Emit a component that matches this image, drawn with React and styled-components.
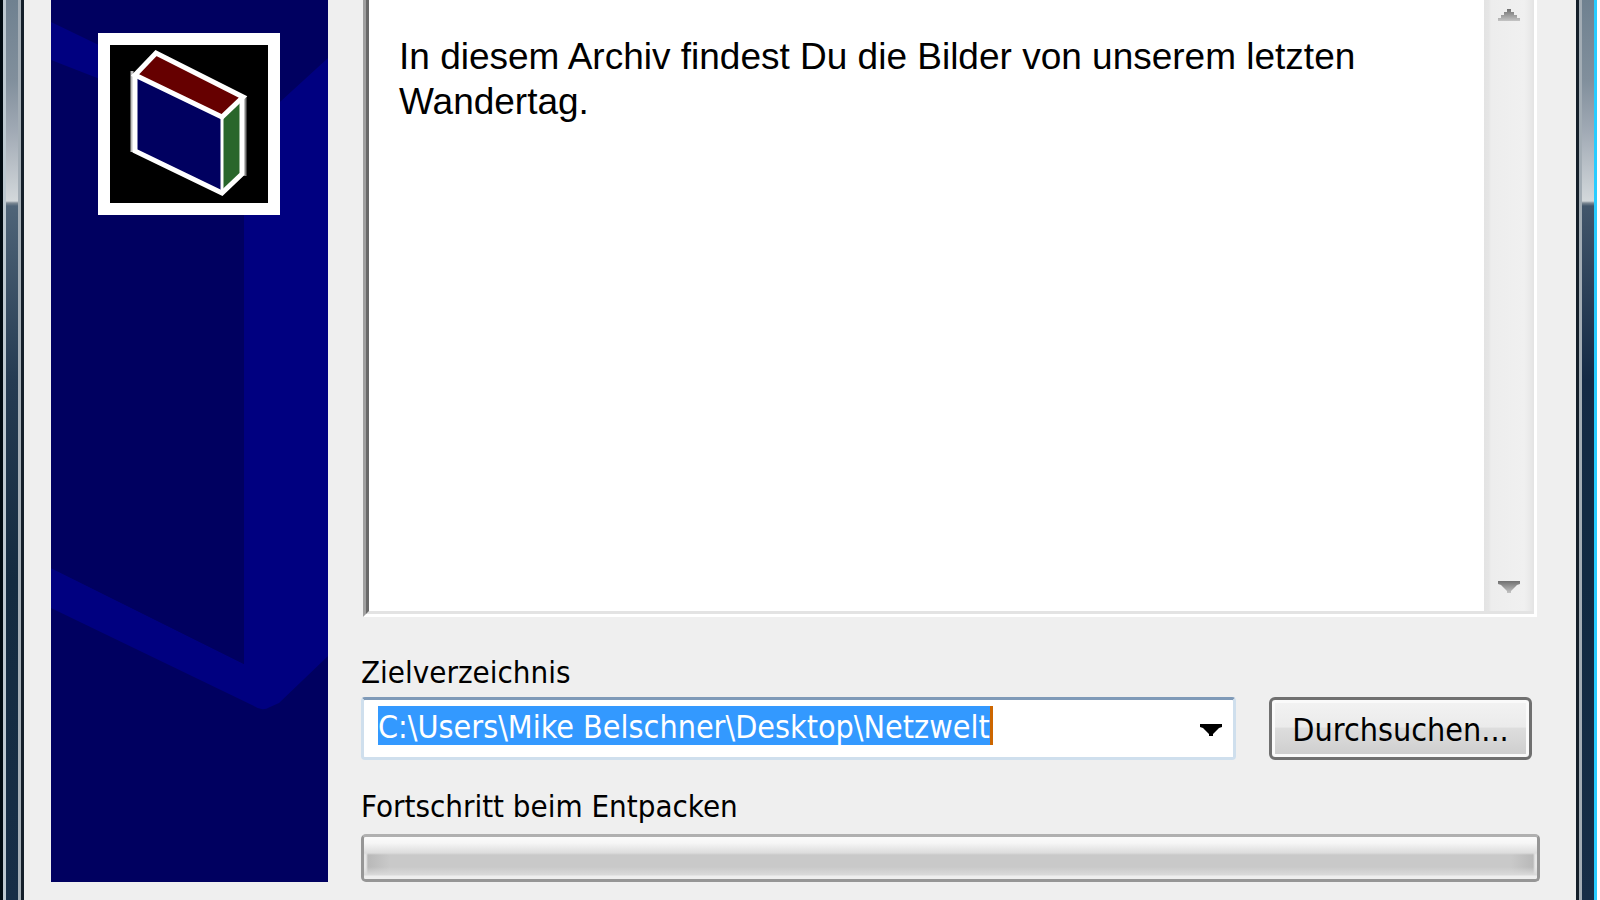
import { useId } from 'react';
import styled, { createGlobalStyle } from 'styled-components';

const GlobalStyle = createGlobalStyle`
  * {
    box-sizing: border-box;
  }

  body {
    margin: 0;
    background: #ffffff;
  }

  button,
  input,
  textarea {
    margin: 0;
    padding: 0;
    border: 0;
    color: inherit;
    font: inherit;
  }
`;

const Window = styled.div`
  display: grid;
  grid-template-columns: 24px minmax(0, 1fr) 24px;
  min-height: 100vh;
  overflow: hidden;
  color: #000000;
  font-family: 'DejaVu Sans Condensed', 'Noto Sans', sans-serif;
  font-size: 32px;
  line-height: 39px;
`;

const FrameSide = styled.div`
  display: flex;
`;

const Line = styled.span`
  width: 3px;
  background: ${({ $color }) => $color};
`;

const Glass = styled.span`
  flex: 1;
  background: linear-gradient(
    to bottom,
    #6f8190 0,
    #818f9c 80px,
    #a0a9b4 130px,
    #d3d8db 201px,
    #7d8994 203px,
    ${({ $upper }) => $upper} 206px,
    ${({ $middle }) => $middle} 380px,
    ${({ $lower }) => $lower} 580px,
    #172e47 900px
  );
`;

const Dialog = styled.main`
  display: grid;
  grid-template-columns: 277px minmax(0, 1fr);
  column-gap: 33px;
  align-items: start;
  padding: 0 36px 15px 27px;
  background: #efefef;
`;

const Banner = styled.aside`
  position: relative;
  height: 882px;
  background: #000060;
`;

const BannerShape = styled.svg`
  display: block;
  width: 100%;
  height: 100%;
`;

const LogoFrame = styled.div`
  position: absolute;
  top: 33px;
  left: 47px;
  width: 182px;
  height: 182px;
  border: 12px solid #ffffff;
  background: #000000;

  svg {
    display: block;
  }
`;

const Content = styled.div`
  display: flex;
  flex-direction: column;
  min-width: 0;
`;

const Memo = styled.div`
  display: flex;
  height: 617px;
  margin: 0 3px 0 2px;
  border-right: 3px solid #ffffff;
  border-bottom: 3px solid #ffffff;
  border-left: 3px solid #a0a0a0;
`;

const MemoText = styled.textarea`
  flex: 1;
  padding: 34px 30px;
  border-bottom: 3px solid #e3e3e3;
  border-left: 3px solid #696969;
  background: #ffffff;
  color: #000000;
  font-family: 'Liberation Sans', sans-serif;
  font-size: 37px;
  line-height: 45px;
  outline: none;
  overflow: hidden;
  resize: none;
`;

const ScrollBar = styled.div`
  display: flex;
  flex-direction: column;
  justify-content: space-between;
  width: 50px;
  border-bottom: 3px solid #e3e3e3;
  background: linear-gradient(
    to right,
    #e3e3e3 0,
    #e6e6e6 5px,
    #ededed 7px,
    #f0f0f0 40px,
    #ececec 44px,
    #e3e3e3 50px
  );
`;

const ScrollButton = styled.button`
  display: flex;
  justify-content: center;
  height: 33px;
  padding-top: ${({ $top }) => $top};
  background: transparent;
`;

const Label = styled.label`
  align-self: flex-start;
  margin-top: ${({ $gap }) => $gap};
  font-size: 31px;
`;

const PathRow = styled.div`
  display: grid;
  grid-template-columns: minmax(0, 1fr) 263px;
  column-gap: 33px;
  height: 63px;
  margin: 5px 8px 0 0;
`;

const ComboBox = styled.div`
  display: flex;
  align-items: flex-start;
  justify-content: space-between;
  padding: 6px 4px 0 14px;
  border: 3px solid #cfdfed;
  border-top-color: #7f9ab8;
  border-radius: 4px;
  background: #ffffff;
`;

const PathInput = styled.input`
  field-sizing: content;
  height: 39px;
  padding-top: 3px;
  border-right: 3px solid #cc6600;
  background: #3399ff;
  color: #ffffff;
  outline: none;
`;

const ArrowButton = styled.button`
  display: flex;
  align-items: flex-start;
  justify-content: center;
  width: 36px;
  height: 48px;
  padding-top: 18px;
  background: transparent;
`;

const BrowseButton = styled.button`
  padding-top: 4px;
  border: 3px solid #707070;
  border-radius: 6px;
  background: linear-gradient(
    to bottom,
    #f3f3f3 0,
    #ebebeb 47%,
    #dddddd 50%,
    #cdcdcd 100%
  );
  box-shadow: inset 0 0 0 3px #fafafa;
`;

const Progress = styled.progress`
  display: block;
  width: 100%;
  height: 48px;
  margin-top: 8px;
  border: 3px solid #969696;
  border-top-color: #b0b0b0;
  border-radius: 5px;
  appearance: none;
  overflow: hidden;
  background: #c9c9c9;

  &::-webkit-progress-bar {
    background:
      linear-gradient(
        to bottom,
        #fbfbfb 0,
        #f6f6f6 6px,
        #dcdcdc 16px,
        transparent 18px,
        transparent 30px,
        #dadada 38px,
        #eeeeee 39px
      ),
      linear-gradient(
        to right,
        #e6e6e6 0,
        #e6e6e6 2px,
        #b9b9b9 4px,
        #c9c9c9 26px,
        #c9c9c9 calc(100% - 26px),
        #b9b9b9 calc(100% - 4px),
        #e6e6e6 calc(100% - 2px)
      );
  }
`;

function BoxLogo() {
  return (
    <svg width='158' height='158' viewBox='110 45 158 158' aria-hidden='true'>
      <path d='M135 75 L156 53 L243 97 L222 117 Z' fill='#660000' />
      <path d='M135 75 L222 117 V193 L135 151 Z' fill='#000060' />
      <path d='M222 117 L243 97 V174 L222 193 Z' fill='#29662b' />
      <path d='M132 71 V152' stroke='#c0c0c0' strokeWidth='3' />
      <path d='M245 96 V176' stroke='#808080' strokeWidth='3' />
      <path
        d='M135 75 L156 53 L243 97 L222 117 Z'
        fill='none'
        stroke='#ffffff'
        strokeWidth='5'
      />
      <path d='M222 117 V193' stroke='#ffffff' strokeWidth='3' />
      <path
        d='M135 74 V151 L222 193 L242 174 V96'
        fill='none'
        stroke='#ffffff'
        strokeWidth='5'
      />
    </svg>
  );
}

function Arrow({ up, color, fade }) {
  const id = useId();
  return (
    <svg width='22' height='12' viewBox='0 0 22 12' aria-hidden='true'>
      <linearGradient id={id} x1='0' y1='0' x2='0' y2='1'>
        <stop offset='0' stopColor={color} />
        <stop offset='1' stopColor={fade} />
      </linearGradient>
      <path
        fill={`url(#${id})`}
        d={
          up
            ? 'M9 0H13V3H16V6H19V9H22V12H0V9H3V6H6V3H9Z'
            : 'M0 0H22V3L19 4L13 10V12H9V10L3 4L0 3Z'
        }
      />
    </svg>
  );
}

function Frame({ side }) {
  if (side === 'left') {
    return (
      <FrameSide>
        <Line $color='#010b12' />
        <Line $color='#bcc8d0' />
        <Glass $upper='#4f6478' $middle='#253b52' $lower='#142b40' />
        <Line $color='#a3adb5' />
        <Line $color='#15202b' />
      </FrameSide>
    );
  }
  return (
    <FrameSide>
      <Line $color='#15202b' />
      <Line $color='#a3adb5' />
      <Glass $upper='#42566b' $middle='#142a45' $lower='#112a42' />
      <Line $color='#29ccff' />
      <Line $color='#ffffff' />
    </FrameSide>
  );
}

function App() {
  return (
    <>
      <GlobalStyle />
      <Window>
        <Frame side='left' />
        <Dialog>
          <Banner>
            <BannerShape viewBox='51 0 277 882' preserveAspectRatio='none'>
              <path
                d='M51 22 L244 115 V664 L51 568 V608 L254 706 Q262 712 270 707 L279 703 L328 656 V58 L244 135 L51 60 Z'
                fill='#000080'
              />
              <path d='M51 60 L244 155 V664 L51 568 Z' fill='#000060' />
            </BannerShape>
            <LogoFrame>
              <BoxLogo />
            </LogoFrame>
          </Banner>
          <Content>
            <Memo>
              <MemoText
                aria-label='Beschreibung'
                readOnly
                value='In diesem Archiv findest Du die Bilder von unserem letzten Wandertag.'
              />
              <ScrollBar>
                <ScrollButton type='button' aria-label='Nach oben' $top='9px'>
                  <Arrow up color='#707070' fade='#c4c4c4' />
                </ScrollButton>
                <ScrollButton type='button' aria-label='Nach unten' $top='3px'>
                  <Arrow color='#707070' fade='#c4c4c4' />
                </ScrollButton>
              </ScrollBar>
            </Memo>
            <Label htmlFor='target' $gap='36px'>
              Zielverzeichnis
            </Label>
            <PathRow>
              <ComboBox>
                <PathInput
                  id='target'
                  type='text'
                  spellCheck='false'
                  defaultValue='C:\Users\Mike Belschner\Desktop\Netzwelt'
                />
                <ArrowButton type='button' aria-label='Liste öffnen'>
                  <Arrow color='#000000' fade='#000000' />
                </ArrowButton>
              </ComboBox>
              <BrowseButton type='button'>Durchsuchen...</BrowseButton>
            </PathRow>
            <Label htmlFor='unpack' $gap='27px'>
              Fortschritt beim Entpacken
            </Label>
            <Progress id='unpack' value='0' max='100' />
          </Content>
        </Dialog>
        <Frame side='right' />
      </Window>
    </>
  );
}

export default App;
